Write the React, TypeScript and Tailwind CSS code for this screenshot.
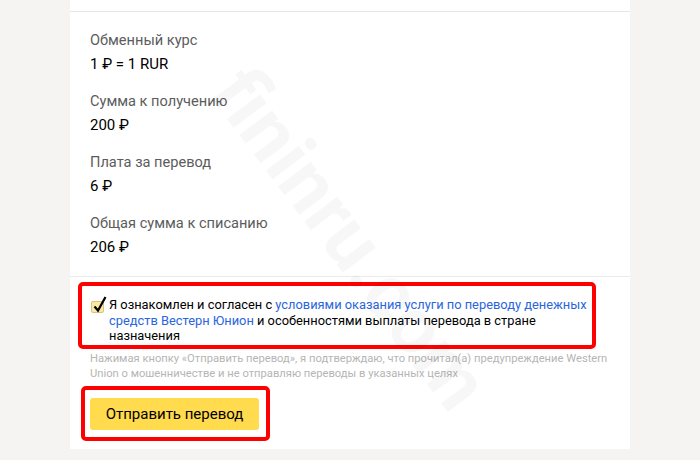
import React from "react";

const font = { fontFamily: "Roboto, 'Liberation Sans', Arial, sans-serif" };

function Row({ label, value, first }: { label: string; value: string; first?: boolean }) {
  return (
    <div className={first ? "" : "mt-[17px]"}>
      <div className="text-[14.6px] leading-[20px] text-[#5c5c5c]">{label}</div>
      <div className="mt-[4px] text-[15px] leading-[20px] text-black">{value}</div>
    </div>
  );
}

export default function App() {
  return (
    <div className="relative w-[700px] h-[460px] overflow-hidden bg-[#f5f4f2]" style={font}>
      <div className="ml-[70px] w-[560px] h-[449px] bg-white flex flex-col">
        <div className="h-[12px] border-b-[1.5px] border-[#e6e6e6] shrink-0" />
        <div className="pl-[20px] pt-[18px] pb-[19px] border-b border-[#ebebeb]">
          <Row first label="Обменный курс" value="1 ₽ = 1 RUR" />
          <Row label="Сумма к получению" value="200 ₽" />
          <Row label="Плата за перевод" value="6 ₽" />
          <Row label="Общая сумма к списанию" value="206 ₽" />
        </div>
        <div className="ml-[8px] mt-[5px] w-[518px] h-[67px] border-4 border-[#ff0000] rounded-[5px] pl-[9px] pt-[11px] flex items-start gap-[5px]">
          <div className="relative mt-[4px] w-[13px] h-[12px] shrink-0 rounded-[2px] bg-[#fce8a4] border border-[#d8c37e]">
            <svg className="absolute left-[1px] top-[-6px]" width="14" height="17" viewBox="0 0 14 17">
              <path d="M1.5 10.5 L5 14.5 L12.5 1" fill="none" stroke="#000" strokeWidth="2.2" />
            </svg>
          </div>
          <div className="whitespace-nowrap text-[12.85px] leading-[15.5px] text-black">
            Я ознакомлен и согласен с{" "}
            <span className="text-[#2a66dc]">условиями оказания услуги по переводу денежных</span>
            <br />
            <span className="text-[#2a66dc]">средств Вестерн Юнион</span> и особенностями выплаты перевода в стране
            <br />
            назначения
          </div>
        </div>
        <div className="ml-[20px] mt-[2px] whitespace-nowrap text-[11.2px] leading-[15px] text-[#b5b5b5]">
          Нажимая кнопку «Отправить перевод», я подтверждаю, что прочитал(а) предупреждение Western
          <br />
          Union о мошенничестве и не отправляю переводы в указанных целях
        </div>
        <div className="ml-[11px] mt-[5px] w-[189px] h-[55px] border-4 border-[#ff0000] rounded-[5px] pl-[5px] pt-[8px]">
          <div className="w-[169px] h-[32px] rounded-[3px] bg-[#ffdb4d] flex items-center justify-center text-[15px] text-black">
            Отправить перевод
          </div>
        </div>
      </div>
      <div className="pointer-events-none absolute left-[115px] top-[200px] w-[470px] text-center rotate-[53deg] text-[78px] font-bold leading-none text-[rgba(0,0,0,0.03)]">
        fininru.com
      </div>
    </div>
  );
}
